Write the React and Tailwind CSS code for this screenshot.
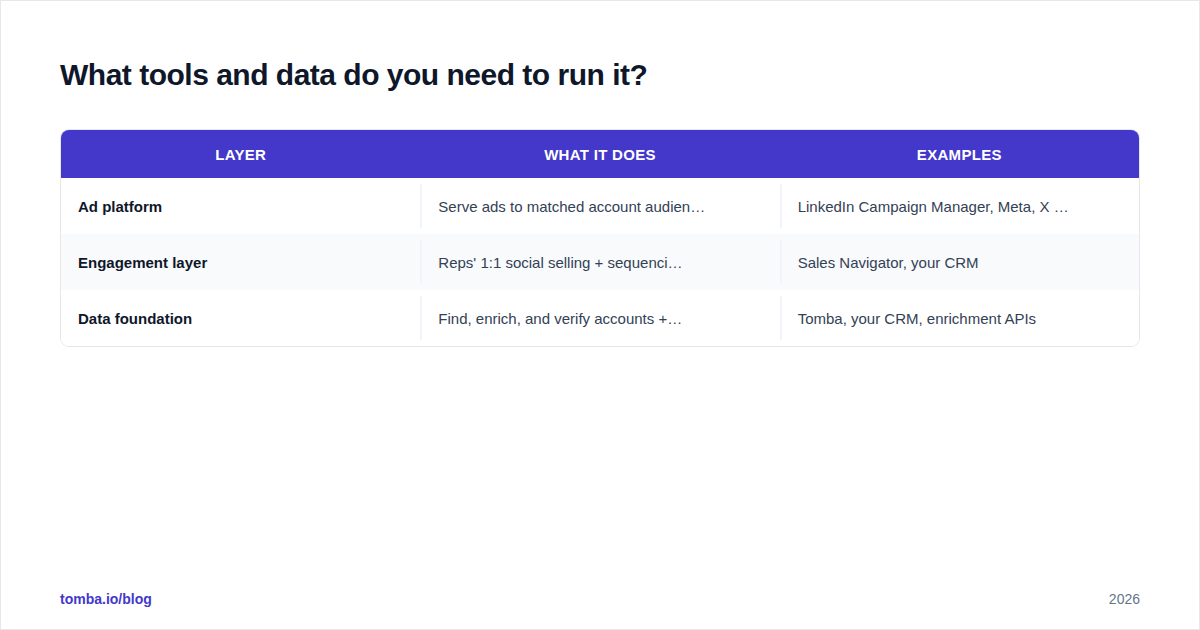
export default function App() {
  const rows = [
    ["Ad platform", "Serve ads to matched account audien…", "LinkedIn Campaign Manager, Meta, X …"],
    ["Engagement layer", "Reps' 1:1 social selling + sequenci…", "Sales Navigator, your CRM"],
    ["Data foundation", "Find, enrich, and verify accounts +…", "Tomba, your CRM, enrichment APIs"],
  ];
  return (
    <div
      className="w-[1200px] h-[630px] bg-white border border-[#e5e7eb] flex flex-col px-[59px] pt-[54px] pb-[20px]"
      style={{ fontFamily: '"Liberation Sans", Arial, sans-serif' }}
    >
      <h1 className="text-[30px] leading-[40px] font-bold text-[#0f172a] tracking-[-0.5px]">
        What tools and data do you need to run it?
      </h1>
      <div className="mt-[34px] border border-[#e5e7eb] rounded-[9px] overflow-hidden">
        <div className="grid grid-cols-3 bg-[#4338ca] h-[48px] items-center pt-[3px]">
          {["LAYER", "WHAT IT DOES", "EXAMPLES"].map((h) => (
            <div key={h} className="text-center text-white font-bold text-[15px] tracking-[0.3px]">
              {h}
            </div>
          ))}
        </div>
        {rows.map((r, i) => (
          <div key={i} className={`grid grid-cols-3 h-[56px] ${i % 2 === 1 ? "bg-[#f8fafc]" : "bg-white"}`}>
            <div className="flex items-center pt-[2px] px-[17px] text-[15px] font-bold text-[#0f172a]">{r[0]}</div>
            <div className="flex items-center pt-[2px] my-[6px] border-l-2 border-[#f1f5f9] px-[16px] text-[15px] text-[#334155]">{r[1]}</div>
            <div className="flex items-center pt-[2px] my-[6px] border-l-2 border-[#f1f5f9] px-[16px] text-[15px] text-[#334155]">{r[2]}</div>
          </div>
        ))}
      </div>
      <div className="mt-auto flex justify-between items-center text-[14px] leading-[20px]">
        <span className="font-bold text-[#4338ca]">tomba.io/blog</span>
        <span className="text-[#64748b]">2026</span>
      </div>
    </div>
  );
}
